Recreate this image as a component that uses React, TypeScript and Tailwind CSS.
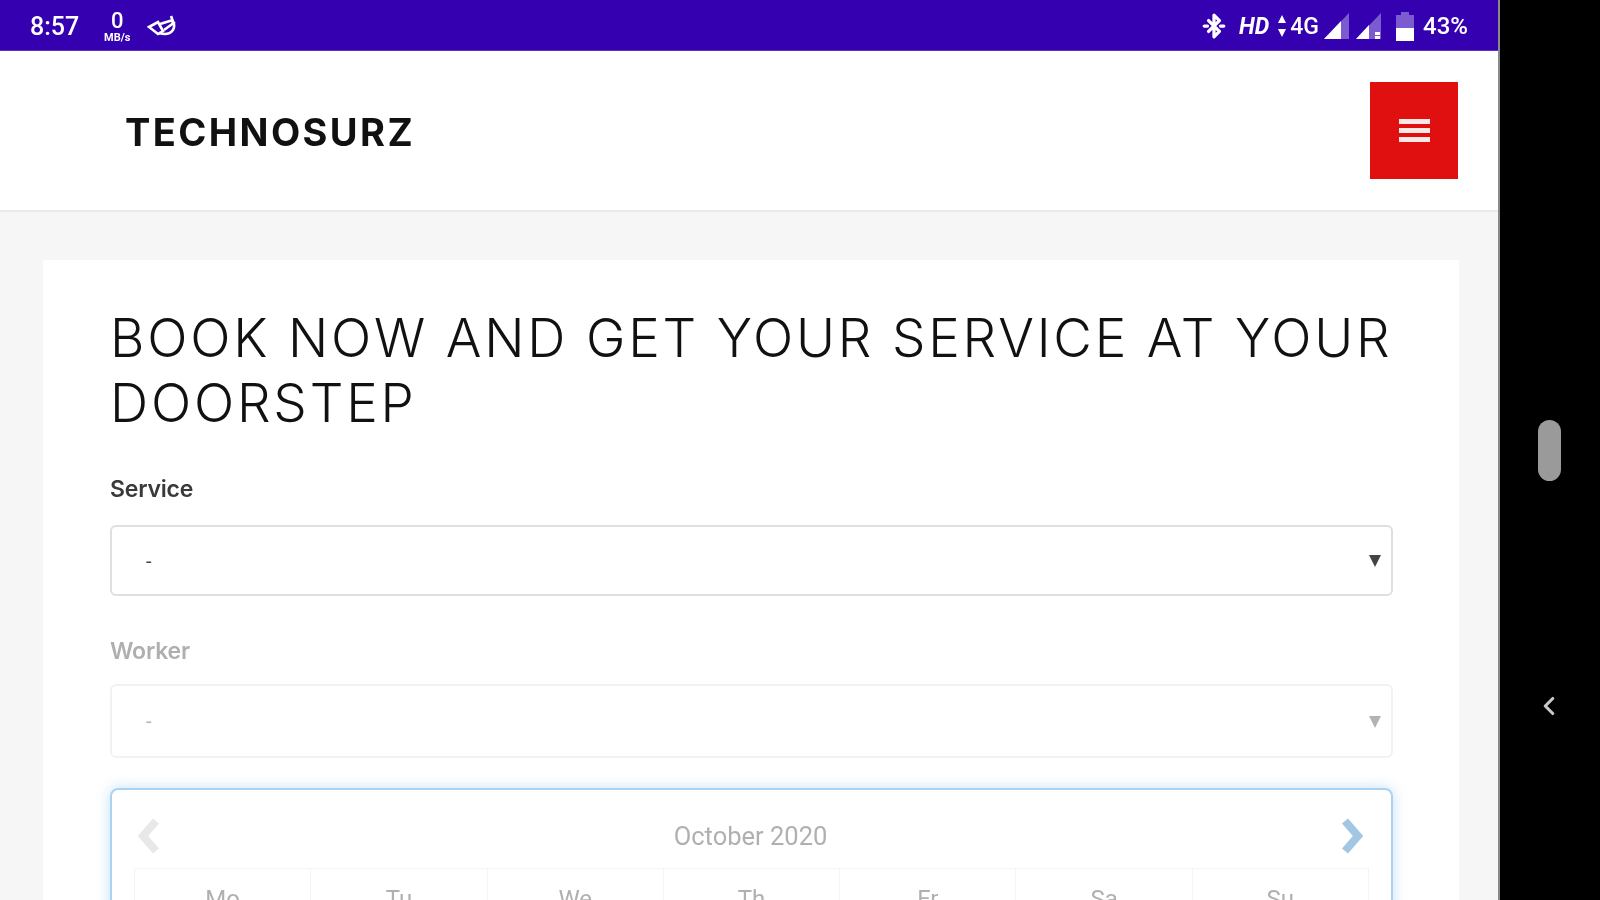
import { BluetoothConnected, ChevronLeft } from "lucide-react";

const days = ["Mo", "Tu", "We", "Th", "Fr", "Sa", "Su"];

function Field({ label, disabled, tall }: { label: string; disabled?: boolean; tall?: boolean }) {
  return (
    <div className={disabled ? "opacity-40" : ""}>
      <div className="h-[26px] text-[23px] leading-[26px] font-semibold text-[#3a3a3a] font-['Inter',sans-serif] tracking-[-0.2px]">
        {label}
      </div>
      <div
        className={`${tall ? "mt-[20px] h-[74px]" : "mt-[23px] h-[71px]"} rounded-[6px] border-2 border-[#dfdfdf] bg-white flex items-center justify-between pl-[34px] pr-[10px] font-['Roboto',sans-serif] text-[#444]`}
      >
        <span className="text-[20px]">-</span>
        <svg width="12" height="13" viewBox="0 0 12 13" className="fill-[#444]">
          <path d="M0 1h12L6 13z" />
        </svg>
      </div>
    </div>
  );
}

function Chevron({ left, color }: { left?: boolean; color: string }) {
  return (
    <svg width="26" height="36" viewBox="0 0 26 36" fill="none" stroke={color} strokeWidth="8" strokeLinejoin="miter">
      <path d={left ? "M20 3L7 18l13 15" : "M6 3l13 15L6 33"} />
    </svg>
  );
}

function StatusBar() {
  return (
    <div className="h-[51px] bg-[#3400b0] flex items-center justify-between pl-[30px] pr-[30px] text-white font-['Roboto',sans-serif] font-medium border-b border-[#5a35c4] shrink-0">
      <div className="flex items-center pt-[2px]">
        <span className="text-[25px] leading-none">8:57</span>
        <div className="ml-[23px] w-[30px] flex flex-col items-center">
          <span className="text-[22px] leading-[22px]">0</span>
          <span className="text-[11px] leading-[11px] font-bold whitespace-nowrap">MB/s</span>
        </div>
        <svg width="32" height="24" viewBox="0 0 32 24" className="ml-[15px] fill-none stroke-white stroke-[2.6]">
          <path d="M2 13l9-5 5 9-5 3z" />
          <path d="M12 19c6 2 11 1 14-3 2-4 1-7-1-9" />
          <path d="M13 10l13-4M17 16l11-8M24 2l3 8" />
        </svg>
      </div>
      <div className="flex items-center pt-[2px]">
        <BluetoothConnected size={26} strokeWidth={3} />
        <span className="ml-[12px] text-[23px] italic font-bold leading-none">HD</span>
        <svg width="10" height="24" viewBox="0 0 10 24" className="ml-[8px] fill-white">
          <path d="M5 1l4 8H1zM5 23l-4-8h8z" />
        </svg>
        <span className="ml-[3px] text-[23px] leading-none">4G</span>
        <svg width="26" height="28" viewBox="0 0 26 28" className="ml-[5px]">
          <path d="M0 27L25 1v26z" fill="#7c5ad0" />
          <path d="M0 27L17 9v18z" fill="#fff" />
        </svg>
        <svg width="26" height="28" viewBox="0 0 26 28" className="ml-[6px]">
          <path d="M0 27L25 1v26z" fill="#7c5ad0" />
          <path d="M0 27L13 13v14z" fill="#fff" />
          <path d="M19 20h5v3h-5zM19 24h5v3h-5z" fill="#fff" />
        </svg>
        <svg width="18" height="29" viewBox="0 0 18 29" className="ml-[14px]">
          <path d="M5 0h8v3h5v26H0V3h5z" fill="#7c5ad0" />
          <path d="M0 16h18v13H0z" fill="#fff" />
        </svg>
        <span className="ml-[9px] text-[24px] leading-none">43%</span>
      </div>
    </div>
  );
}

export default function App() {
  return (
    <div className="h-[900px] w-[1600px] overflow-hidden flex bg-black blur-[0.7px]">
      <div className="w-[1500px] flex flex-col bg-[#f6f6f6] border-r-2 border-[#8a8a8a]">
        <StatusBar />
        <header className="h-[161px] shrink-0 bg-white border-b-2 border-[#e9e9e9] flex items-center justify-between pl-[125px] pr-[40px]">
          <span className="pt-[3px] font-['Inter',sans-serif] font-bold text-[38px] tracking-[2.4px] text-[#111]">TECHNOSURZ</span>
          <button className="w-[88px] h-[97px] bg-[#e01010] flex flex-col items-center justify-center gap-[4px]">
            <span className="block w-[31px] h-[5px] bg-white/90" />
            <span className="block w-[31px] h-[5px] bg-white/90" />
            <span className="block w-[31px] h-[5px] bg-white/90" />
          </button>
        </header>
        <main className="flex-1 pt-[48px] pl-[43px] pr-[39px] min-h-0">
          <div className="h-full bg-white pt-[46px] pl-[67px] pr-[66px]">
            <h1 className="font-['Inter',sans-serif] font-light text-[53px] leading-[65px] text-[#111] tracking-[2.8px]">
              BOOK NOW AND GET YOUR SERVICE AT YOUR DOORSTEP
            </h1>
            <div className="mt-[40px]">
              <Field label="Service" />
            </div>
            <div className="mt-[42px]">
              <Field label="Worker" disabled tall />
            </div>
            <section className="mt-[30px] h-[200px] rounded-[8px] border-2 border-[#a9d2f3] shadow-[0_0_14px_rgba(140,195,240,0.5)] pl-[24px] pr-[26px] pt-[28px]">
              <div className="flex items-center justify-between h-[36px]">
                <Chevron left color="#e8e8e8" />
                <span className="font-['Roboto',sans-serif] text-[25.5px] text-[#b0b0b0]">October 2020</span>
                <Chevron color="#a3c6e2" />
              </div>
              <div className="mt-[14px] -ml-[2px] -mr-[4px] grid grid-cols-7 border-t border-l border-[#f4f4f4]">
                {days.map((d) => (
                  <div key={d} className="h-[60px] border-r border-[#f4f4f4] pt-[12px] text-center font-['Roboto',sans-serif] text-[24px] text-[#b0b0b0]">
                    {d}
                  </div>
                ))}
              </div>
            </section>
          </div>
        </main>
      </div>
      <aside className="flex-1 flex flex-col items-center pt-[420px] pr-[2px]">
        <div className="w-[23px] h-[61px] rounded-full bg-[#9a9a9a]" />
        <ChevronLeft size={30} strokeWidth={2.5} className="mt-[210px] text-[#c8c8c8]" />
      </aside>
    </div>
  );
}
